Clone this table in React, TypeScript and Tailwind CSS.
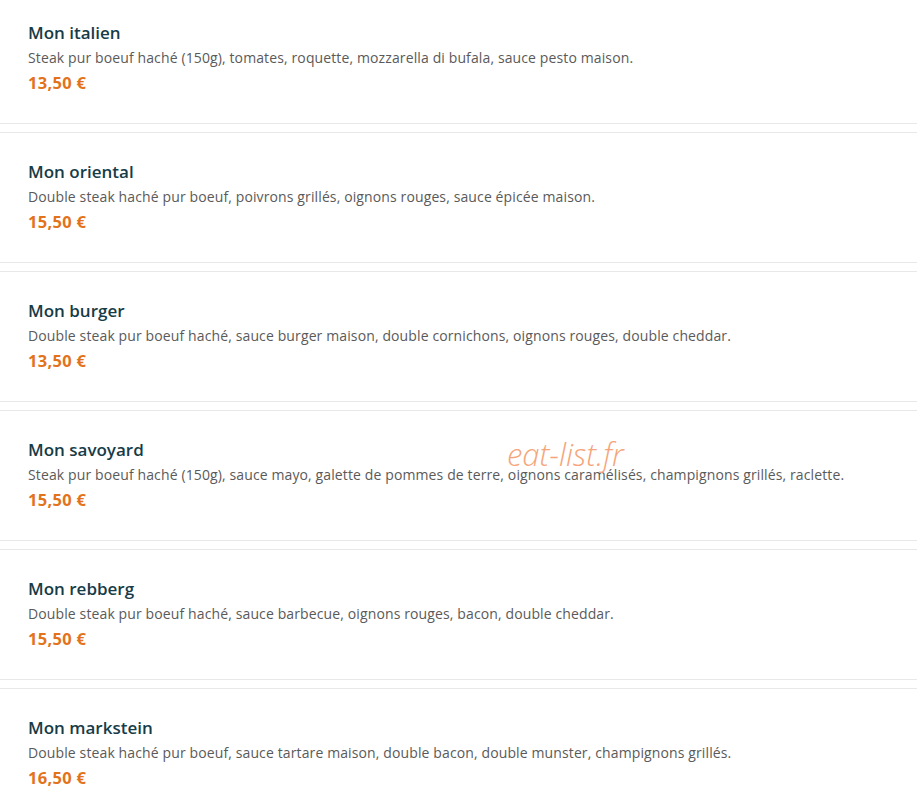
import React from 'react';

const ITEMS = [
  { name: 'Mon italien', desc: 'Steak pur boeuf haché (150g), tomates, roquette, mozzarella di bufala, sauce pesto maison.', price: '13,50 €' },
  { name: 'Mon oriental', desc: 'Double steak haché pur boeuf, poivrons grillés, oignons rouges, sauce épicée maison.', price: '15,50 €' },
  { name: 'Mon burger', desc: 'Double steak pur boeuf haché, sauce burger maison, double cornichons, oignons rouges, double cheddar.', price: '13,50 €' },
  { name: 'Mon savoyard', desc: 'Steak pur boeuf haché (150g), sauce mayo, galette de pommes de terre, oignons caramélisés, champignons grillés, raclette.', price: '15,50 €' },
  { name: 'Mon rebberg', desc: 'Double steak pur boeuf haché, sauce barbecue, oignons rouges, bacon, double cheddar.', price: '15,50 €' },
  { name: 'Mon markstein', desc: 'Double steak haché pur boeuf, sauce tartare maison, double bacon, double munster, champignons grillés.', price: '16,50 €' },
];

export default function App() {
  return (
    <div className="relative h-[801px] overflow-hidden bg-white" style={{ fontFamily: '"Open Sans", "Noto Sans", sans-serif' }}>
      <div className="-mt-[7px] flex flex-col gap-2">
        {ITEMS.map((item) => (
          <div key={item.name} className="h-[131px] border-y border-[#e8e8e8] px-7 pt-[28px]">
            <h3 className="text-[17px] font-semibold leading-[22px] text-[#173c48]">{item.name}</h3>
            <p className="mt-[4px] text-[14px] tracking-[0.12px] leading-[20px] text-[#5a5a5a]">{item.desc}</p>
            <p className="mt-[5px] text-[16.5px] font-bold leading-[20px] tracking-[0.3px] text-[#e2731c]">{item.price}</p>
          </div>
        ))}
      </div>
      <div className="pointer-events-none absolute left-[507px] top-[431px] text-[31px] font-light italic text-[#f5a57c]">
        eat-list.fr
      </div>
    </div>
  );
}
